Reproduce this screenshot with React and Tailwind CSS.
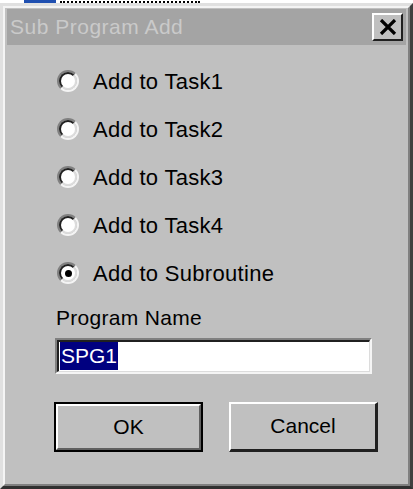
import React, { useState } from 'react';

const options = ['Add to Task1', 'Add to Task2', 'Add to Task3', 'Add to Task4', 'Add to Subroutine'];

// classic sunken radio dot
const Radio = ({ checked }) => (
  <span className="relative flex h-[22px] w-[22px] items-center justify-center rounded-full border-[2px] border-t-[#808080] border-l-[#808080] border-r-[#f4f4f4] border-b-[#f4f4f4]">
    <span className="flex h-full w-full items-center justify-center rounded-full border-[2px] border-t-[#202020] border-l-[#202020] border-r-[#dcdcdc] border-b-[#dcdcdc] bg-white">
      {checked && <span className="h-[7px] w-[7px] rounded-full bg-black" />}
    </span>
  </span>
);

const App = () => {
  const [selected, setSelected] = useState(4);

  return (
    <div className="h-[489px] w-[413px] overflow-hidden bg-white" style={{ fontFamily: '"Liberation Sans", Arial, sans-serif' }}>
      {/* window behind the dialog */}
      <div className="flex h-[3px] items-end gap-[4px] pl-[24px]">
        <div className="h-[3px] w-[32px] bg-[#1f4fb0]" />
        <div className="h-[2px] w-[140px] border-b-[2px] border-dotted border-black" />
      </div>

      {/* dialog frame */}
      <div className="flex h-[486px] flex-col border-t-[3px] border-l-[3px] border-r-[3px] border-b-[3px] border-t-[#e0e0e0] border-l-[#e0e0e0] border-r-[#404040] border-b-[#303030] bg-[#c0c0c0]">
        <div className="flex flex-1 flex-col border-t-[2px] border-l-[2px] border-r-[2px] border-b-[2px] border-t-[#f4f4f4] border-l-[#f4f4f4] border-r-[#808080] border-b-[#808080] px-[2px] pt-[1px]">
          {/* title bar */}
          <div className="flex h-[36px] items-center justify-between bg-[#a4a4a4] pl-[3px] pr-[3px]">
            <span className="text-[21px] tracking-[0.5px] text-[#cacaca]">Sub Program Add</span>
            <button className="flex h-[28px] w-[31px] items-center justify-center border-t-[2px] border-l-[2px] border-r-[2px] border-b-[2px] border-t-white border-l-white border-r-[#202020] border-b-[#202020] bg-[#c0c0c0]">
              <svg width="18" height="16" viewBox="0 0 18 16">
                <path d="M2 1 L16 15 M16 1 L2 15" stroke="#000" strokeWidth="3.2" />
              </svg>
            </button>
          </div>

          {/* options */}
          <div className="flex flex-col gap-[26px] pl-[50px] pt-[25px]">
            {options.map((label, i) => (
              <label key={label} className="flex h-[22px] cursor-default items-center gap-[14px]" onClick={() => setSelected(i)}>
                <Radio checked={selected === i} />
                <span className="text-[22px] tracking-[0.3px] text-black">{label}</span>
              </label>
            ))}
          </div>

          {/* program name */}
          <div className="pl-[49px] pt-[18px] text-[21px] tracking-[0.3px] text-black">Program Name</div>
          <div className="ml-[48px] mt-[4px] flex h-[36px] w-[317px] items-center border-t-[2px] border-l-[2px] border-r-[2px] border-b-[2px] border-t-[#808080] border-l-[#808080] border-r-[#f4f4f4] border-b-[#f4f4f4]">
            <div className="flex h-full w-full items-center border-t-[2px] border-l-[2px] border-r-[1px] border-b-[1px] border-t-[#202020] border-l-[#202020] border-r-[#dcdcdc] border-b-[#dcdcdc] bg-white pl-[1px]">
              <span className="bg-[#000080] px-[1px] text-[21px] leading-[28px] text-white">SPG1</span>
            </div>
          </div>

          {/* buttons */}
          <div className="flex gap-[26px] pl-[47px] pt-[28px]">
            <button className="h-[50px] w-[149px] border-[2px] border-black">
              <span className="flex h-full w-full items-center justify-center border-t-[2px] border-l-[2px] border-r-[2px] border-b-[2px] border-t-white border-l-white border-r-[#606060] border-b-[#606060] bg-[#c0c0c0] text-[21px] text-black">
                OK
              </span>
            </button>
            <button className="flex h-[50px] w-[149px] items-center justify-center border-t-[2px] border-l-[2px] border-r-[3px] border-b-[3px] border-t-white border-l-white border-r-[#202020] border-b-[#202020] bg-[#c0c0c0] text-[21px] text-black">
              Cancel
            </button>
          </div>
        </div>
      </div>
    </div>
  );
};

export default App;
